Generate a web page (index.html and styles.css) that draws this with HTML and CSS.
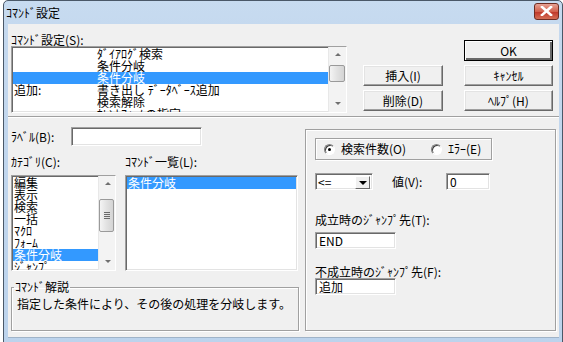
FILE: index.html
```html
<!DOCTYPE html>
<html lang="ja">
<head>
  <meta charset="UTF-8">
  <title>ｺﾏﾝﾄﾞ設定</title>
  <link rel="stylesheet" href="styles.css">
</head>
<body>
  <div class="window">
    <div class="titlebar">
      <span class="title">ｺﾏﾝﾄﾞ設定</span>
      <span class="close">
        <svg width="13" height="10" viewBox="0 0 13 10"><path d="M2 1 L11 9 M11 1 L2 9" stroke="#fff" stroke-width="2.6" stroke-linecap="square"/></svg>
      </span>
    </div>

    <div class="client">
      <div class="top">
        <div class="top-main">
          <div class="cap">ｺﾏﾝﾄﾞ設定(S):</div>
          <div class="listbox cmd-set">
            <div class="rows">
              <div class="row"><span class="col-a"></span><span>ﾀﾞｲｱﾛｸﾞ検索</span></div>
              <div class="row"><span class="col-a"></span><span>条件分岐</span></div>
              <div class="row sel"><span class="col-a"></span><span>条件分岐</span></div>
              <div class="row"><span class="col-a">追加:</span><span>書き出し ﾃﾞｰﾀﾍﾞｰｽ追加</span></div>
              <div class="row"><span class="col-a"></span><span>検索解除</span></div>
              <div class="row"><span class="col-a"></span><span>ｶﾚﾝﾄﾌｫｰﾑの指定</span></div>
            </div>
            <div class="vscroll">
              <div class="arrow up"></div>
              <div class="track"><div class="thumb thumb-top"></div></div>
              <div class="arrow down"></div>
            </div>
          </div>
        </div>
        <div class="mid-btns">
          <button class="btn">挿入(I)</button>
          <button class="btn">削除(D)</button>
        </div>
        <div class="side-btns">
          <button class="btn default">OK</button>
          <button class="btn">ｷｬﾝｾﾙ</button>
          <button class="btn">ﾍﾙﾌﾟ(H)</button>
        </div>
      </div>

      <div class="sep"></div>

      <div class="bottom">
        <div class="left">
          <div class="label-row">
            <span class="label-cap">ﾗﾍﾞﾙ(B):</span>
            <div class="field label-input"></div>
          </div>
          <div class="heads">
            <span class="head-cat">ｶﾃｺﾞﾘ(C):</span>
            <span>ｺﾏﾝﾄﾞ一覧(L):</span>
          </div>
          <div class="lists">
            <div class="listbox cat-list">
              <div class="rows">
                <div class="row">編集</div>
                <div class="row">表示</div>
                <div class="row">検索</div>
                <div class="row">一括</div>
                <div class="row">ﾏｸﾛ</div>
                <div class="row">ﾌｫｰﾑ</div>
                <div class="row sel">条件分岐</div>
                <div class="row">ｼﾞｬﾝﾌﾟ</div>
              </div>
              <div class="vscroll">
                <div class="arrow up"></div>
                <div class="track"><div class="thumb thumb-cat"><span class="grip"></span></div></div>
                <div class="arrow down"></div>
              </div>
            </div>
            <div class="listbox cmd-list">
              <div class="rows">
                <div class="row sel">条件分岐</div>
              </div>
            </div>
          </div>
          <fieldset class="group">
            <legend>ｺﾏﾝﾄﾞ解説</legend>
            <p class="desc">指定した条件により、その後の処理を分岐します。</p>
          </fieldset>
        </div>

        <div class="panel">
          <div class="radio-box">
            <span class="radio checked"></span><span class="radio-label">検索件数(O)</span>
            <span class="radio second"></span><span class="radio-label">ｴﾗｰ(E)</span>
          </div>
          <div class="cond-row">
            <div class="field combo">
              <span class="combo-text">&lt;=</span>
              <span class="combo-btn"></span>
            </div>
            <span class="value-cap">値(V):</span>
            <div class="field value-input">0</div>
          </div>
          <div class="cap jump-cap">成立時のｼﾞｬﾝﾌﾟ先(T):</div>
          <div class="field jump-input">END</div>
          <div class="cap jump-cap second">不成立時のｼﾞｬﾝﾌﾟ先(F):</div>
          <div class="field jump-input">追加</div>
        </div>
      </div>
    </div>
  </div>
</body>
</html>
```

FILE: styles.css
```css
body {
  margin: 0;
  background-color: #fff;
  font-family: "Noto Sans CJK JP", "Liberation Sans", sans-serif;
  font-size: 12px;
  line-height: 12px;
  color: #000;
  overflow: hidden;
}

.window {
  margin-left: 3px;
  width: 560px;
  height: 348px;
  box-sizing: border-box;
  border: 1px solid #4a5868;
  border-radius: 5px 5px 0 0;
  background: linear-gradient(#c7dbf0, #c4d8ee 40px, #bcd3ec);
}

.titlebar {
  height: 23px;
  display: flex;
  align-items: center;
  padding: 0 2px 0 2px;
}

.title {
  flex: 1;
  font-size: 12px;
}

.close {
  width: 25px;
  height: 17px;
  margin-top: -3px;
  margin-right: 1px;
  box-sizing: border-box;
  border: 1px solid #6e2c22;
  border-radius: 3px;
  background: linear-gradient(#e6a193, #d2614d 50%, #c0392b 55%, #d46e55);
  display: flex;
  align-items: center;
  justify-content: center;
}

.client {
  margin: 0 3px 0 4px;
  height: 313px;
  background-color: #f0f0f0;
  border: 1px solid #9fb3c8;
  border-width: 0 0 1px 0;
}

/* top part */
.top {
  display: flex;
  padding: 9px 0 0 3px;
}

.top-main {
  width: 336px;
}

.cap {
  height: 13px;
  line-height: 13px;
  white-space: nowrap;
}

.listbox {
  display: flex;
  box-sizing: border-box;
  background: #fff;
  border: 1px solid;
  border-color: #a0a0a0 #fff #fff #a0a0a0;
  box-shadow: inset 1px 1px #696969, inset -1px -1px #e3e3e3;
  overflow: hidden;
}

.cmd-set {
  height: 67px;
}

.rows {
  flex: 1;
  padding: 1px 0 0 1px;
  overflow: hidden;
}

.row {
  display: flex;
  height: 12px;
  line-height: 12px;
  white-space: nowrap;
  padding-left: 1px;
}

.row.sel {
  background-color: #3399ff;
  color: #fff;
}

.col-a {
  width: 83px;
  flex: none;
}

.vscroll {
  width: 17px;
  flex: none;
  display: flex;
  flex-direction: column;
  background: #f3f3f3;
  border-left: 1px solid #e8e8e8;
}

.arrow {
  height: 17px;
  flex: none;
  position: relative;
}

.arrow::after {
  content: "";
  position: absolute;
  left: 6px;
  border-left: 3px solid transparent;
  border-right: 3px solid transparent;
}

.arrow.up::after {
  top: 6px;
  border-bottom: 3px solid #707070;
}

.arrow.down::after {
  top: 7px;
  border-top: 3px solid #707070;
}

.track {
  flex: 1;
  position: relative;
}

.thumb {
  position: absolute;
  left: 0;
  right: 1px;
  box-sizing: border-box;
  border: 1px solid #9a9a9a;
  border-radius: 2px;
  background: linear-gradient(90deg, #f4f4f4, #e2e2e2 50%, #d4d4d4);
}

.thumb-top {
  top: 1px;
  height: 17px;
}

.thumb-cat {
  top: 6px;
  height: 33px;
  display: flex;
  align-items: center;
  justify-content: center;
}

.grip {
  width: 6px;
  height: 7px;
  background: repeating-linear-gradient(#6a6a6a 0 1px, transparent 1px 2px);
}

.mid-btns,
.side-btns {
  display: flex;
  flex-direction: column;
  gap: 4px;
}

.mid-btns {
  margin-left: 16px;
  padding-top: 32px;
}

.side-btns {
  margin-left: 21px;
  padding-top: 7px;
}

.btn {
  width: 80px;
  height: 21px;
  padding: 0;
  font-family: inherit;
  font-size: 12px;
  line-height: 12px;
  color: #000;
  background-color: #f0f0f0;
  border: 1px solid;
  border-color: #fff #696969 #696969 #fff;
  box-shadow: inset -1px -1px #a0a0a0, inset 1px 1px #e3e3e3;
}

.side-btns .btn {
  width: 89px;
}

.btn.default {
  border-color: #000;
  box-shadow: inset 1px 1px #fff, inset -2px -2px #696969;
}

.sep {
  margin-top: 3px;
  border-top: 1px solid #a0a0a0;
  border-bottom: 1px solid #fff;
}

/* bottom part */
.bottom {
  display: flex;
  padding-left: 3px;
}

.left {
  width: 288px;
}

.field {
  box-sizing: border-box;
  background: #fff;
  border: 1px solid;
  border-color: #a0a0a0 #fff #fff #a0a0a0;
  box-shadow: inset 1px 1px #696969, inset -1px -1px #e3e3e3;
  padding: 2px 0 0 3px;
  line-height: 13px;
}

.label-row {
  display: flex;
  align-items: center;
  margin-top: 9px;
  height: 19px;
}

.label-cap {
  width: 60px;
}

.label-input {
  width: 131px;
  height: 19px;
}

.heads {
  display: flex;
  margin-top: 9px;
  height: 13px;
  line-height: 13px;
}

.head-cat {
  width: 114px;
}

.lists {
  display: flex;
  gap: 9px;
  margin-top: 7px;
}

.cat-list {
  width: 105px;
  height: 96px;
}

.cat-list .vscroll {
  width: 16px;
}

.cmd-list {
  width: 173px;
  height: 96px;
}

.cmd-list .rows {
  padding-right: 1px;
}

.group {
  margin: 10px 0 0 0;
  padding: 4px 0 0 5px;
  height: 50px;
  box-sizing: border-box;
  border: 1px solid #a0a0a0;
  box-shadow: inset 1px 1px #fff, 1px 1px #fff;
}

.group legend {
  padding: 0 1px;
  margin-left: -3px;
  line-height: 12px;
}

.desc {
  margin: 0;
  line-height: 13px;
  white-space: nowrap;
}

.panel {
  margin: 11px 0 0 6px;
  width: 251px;
  height: 202px;
  box-sizing: border-box;
  border: 1px solid #a0a0a0;
  box-shadow: inset 1px 1px #fff, 1px 1px #fff;
  padding: 8px 0 0 9px;
}

.radio-box {
  display: flex;
  align-items: center;
  width: 177px;
  height: 22px;
  box-sizing: border-box;
  border: 1px solid #a0a0a0;
  box-shadow: inset 1px 1px #fff, 1px 1px #fff;
  padding-left: 8px;
  white-space: nowrap;
}

.radio {
  width: 11px;
  height: 11px;
  flex: none;
  box-sizing: border-box;
  border-radius: 50%;
  border: 1px solid;
  border-color: #808080 #fff #fff #808080;
  background: #fff;
  box-shadow: inset 1px 1px #404040;
  position: relative;
}

.radio.checked::after {
  content: "";
  position: absolute;
  left: 3px;
  top: 3px;
  width: 3px;
  height: 3px;
  border-radius: 50%;
  background: #000;
}

.radio.second {
  margin-left: 25px;
}

.radio-label {
  margin-left: 6px;
  flex: none;
}

.cond-row {
  display: flex;
  align-items: center;
  margin-top: 13px;
  height: 17px;
}

.combo {
  width: 58px;
  height: 17px;
  display: flex;
  padding: 1px 2px 0 2px;
}

.combo-text {
  flex: 1;
  line-height: 14px;
}

.combo-btn {
  width: 15px;
  height: 13px;
  margin-top: 1px;
  box-sizing: border-box;
  background: #f0f0f0;
  border: 1px solid;
  border-color: #fff #696969 #696969 #fff;
  position: relative;
}

.combo-btn::after {
  content: "";
  position: absolute;
  left: 3px;
  top: 4px;
  border-left: 4px solid transparent;
  border-right: 4px solid transparent;
  border-top: 4px solid #000;
}

.value-cap {
  margin-left: 19px;
  width: 54px;
}

.value-input {
  width: 44px;
  height: 17px;
  padding-top: 1px;
}

.jump-cap {
  margin-top: 23px;
}

.jump-cap.second {
  margin-top: 16px;
}

.jump-input {
  width: 81px;
  height: 17px;
  margin-top: 6px;
  padding-top: 1px;
}

.jump-cap.second + .jump-input {
  margin-top: 0;
}
```
